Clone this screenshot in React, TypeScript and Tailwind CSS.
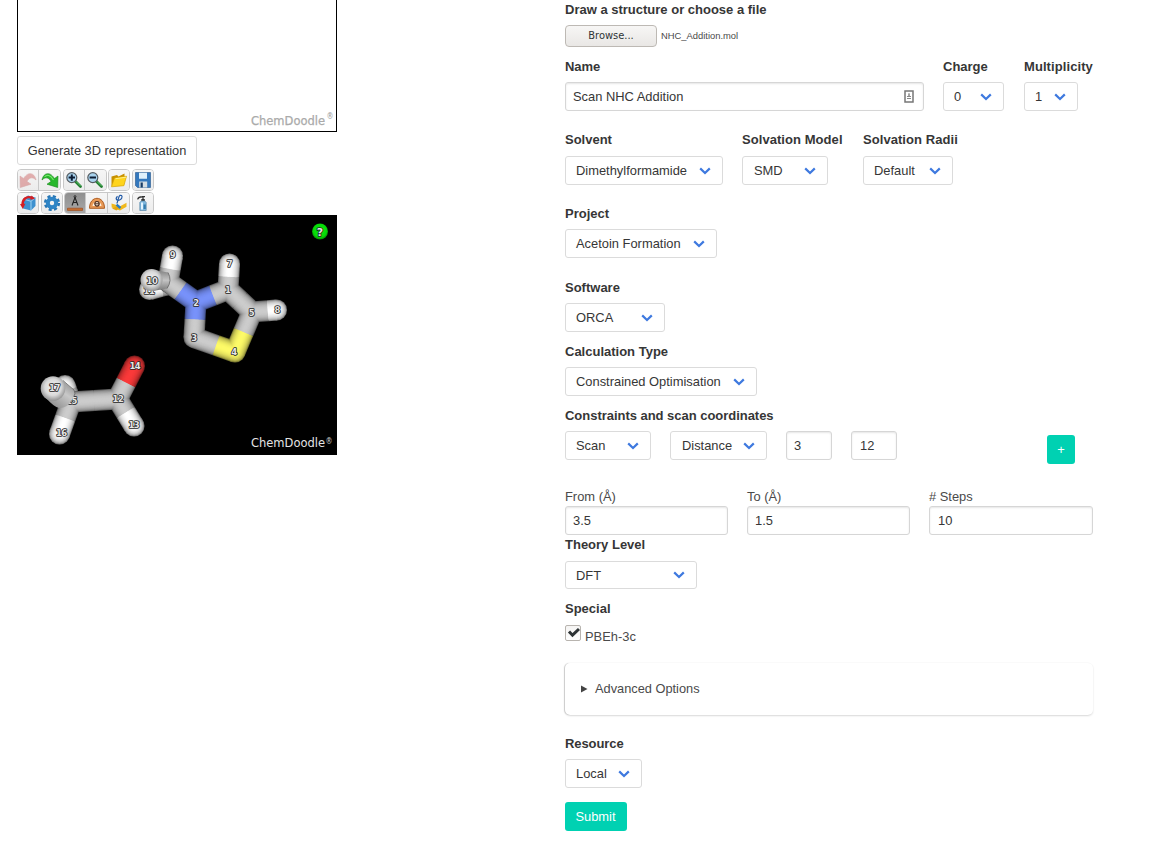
import React, { useState } from "react";

/* ---------- form primitives ---------- */

function Label({ children, className = "" }: { children: React.ReactNode; className?: string }) {
  return <div className={`h-5 whitespace-nowrap text-[13px] font-bold leading-5 text-[#363636] ${className}`}>{children}</div>;
}

function Select({ value, className = "", height = "h-[29px]" }: { value: string; className?: string; height?: string }) {
  return (
    <button
      type="button"
      className={`flex items-center justify-between rounded-[3px] border border-[#dbdbdb] bg-white pl-[10px] pr-[11px] text-[12.9px] leading-[13px] text-[#363636] ${height} ${className}`}
    >
      <span className="whitespace-nowrap">{value}</span>
      <svg width="12" height="8" viewBox="0 0 12 8" fill="none">
        <path d="M1.2 1.4 6 6 10.8 1.4" stroke="#3e79df" strokeWidth="2.2" />
      </svg>
    </button>
  );
}

function Field({ initial, className = "" }: { initial: string; className?: string }) {
  const [value, setValue] = useState(initial);
  return (
    <input
      value={value}
      onChange={(e) => setValue(e.target.value)}
      className={`block h-[29px] rounded-[3px] border border-[#d6d6d6] bg-white px-[7px] text-[12.9px] text-[#363636] shadow-[inset_0_1px_2px_rgba(10,10,10,0.1)] outline-none ${className}`}
    />
  );
}

/* ---------- toolbar ---------- */

function Icon({ children, faded = false }: { children: React.ReactNode; faded?: boolean }) {
  return (
    <svg width="18" height="18" viewBox="0 0 18 18" fill="none" className={`shrink-0 ${faded ? "opacity-40" : ""}`}>
      {children}
    </svg>
  );
}

function Magnifier({ plus = false }: { plus?: boolean }) {
  return (
    <Icon>
      <path d="M10.5 10.5 15.5 15.5" stroke="#1d7a2c" strokeWidth="2.8" strokeLinecap="round" />
      <path d="m11 10.4 4.8 4.8" stroke="#63c56c" strokeWidth="1" />
      <circle cx="6.8" cy="6.6" r="5" fill="#a9d3ee" stroke="#555b60" strokeWidth="1.2" />
      <path d="M3.6 6.6H10" stroke="#0c1c33" strokeWidth="2" />
      {plus && <path d="M6.8 3.4v6.4" stroke="#0c1c33" strokeWidth="2" />}
    </Icon>
  );
}

function ToolGroup({ children }: { children: React.ReactNode }) {
  return <div className="flex h-[22px] overflow-hidden rounded-[4px] border border-[#c8c8c8] bg-[#f1f1f1]">{children}</div>;
}

function Tool({ children, active = false, divided = false }: { children: React.ReactNode; active?: boolean; divided?: boolean }) {
  return (
    <button
      type="button"
      className={`flex h-5 items-center justify-center ${divided ? "w-[22px] border-l border-[#c8c8c8]" : "w-5"} ${
        active ? "bg-linear-to-b from-[#8f8f8f] to-[#a8a8a8]" : "bg-linear-to-b from-[#f6f6f6] to-[#ececec]"
      }`}
    >
      {children}
    </button>
  );
}

function Toolbar() {
  return (
    <div className="mt-[4px] flex flex-col gap-[1px]">
      <div className="flex gap-[1.5px]">
        <ToolGroup>
          <Tool>
            <Icon faded>
              <path d="M17 9C16 3 10-1 4.5 7.5L1 5 1.3 16.5 12 13.2 8 10.5C10 6.5 13.5 5.5 17 9Z" fill="#c64545" stroke="#b03b3b" strokeWidth=".6" />
            </Icon>
          </Tool>
          <Tool divided>
            <Icon>
              <path d="M1 9C2 3 8-1 13.5 7.5L17 5 16.7 16.5 6 13.2 10 10.5C8 6.5 4.5 5.5 1 9Z" fill="#27b72b" stroke="#15861a" strokeWidth=".6" />
              <path d="M3.5 6C6 3.2 9.5 4 12.5 9" stroke="#76e66b" strokeWidth="1.1" />
            </Icon>
          </Tool>
        </ToolGroup>
        <ToolGroup>
          <Tool><Magnifier plus /></Tool>
          <Tool divided><Magnifier /></Tool>
        </ToolGroup>
        <ToolGroup>
          <Tool>
            <Icon>
              <path d="M1.5 15.5V5.5L7 4l1.5 1.5L14.5 2.5v4L5 8Z" fill="#c79000" />
              <path d="m1.5 15.8 3-8.8 12-1.8-2.6 9.5Z" fill="#ffd41c" stroke="#d6a200" strokeWidth=".7" />
              <path d="m5.5 7.7 10.5-1.5" stroke="#fff08a" />
            </Icon>
          </Tool>
        </ToolGroup>
        <ToolGroup>
          <Tool>
            <Icon>
              <path d="M1.5 1.5h15v15h-13l-2-2Z" fill="#3478bd" stroke="#24568c" strokeWidth=".6" />
              <path d="M5 1.8h8v6H5Z" fill="#dff0fb" />
              <path d="M5.2 10.5h8v6h-8Z" fill="#d5dde3" />
              <path d="M6.6 11.4h2.2v5H6.6Z" fill="#173c67" />
            </Icon>
          </Tool>
        </ToolGroup>
      </div>
      <div className="flex gap-[1.5px]">
        <ToolGroup>
          <Tool>
            <Icon>
              <path d="m4 5 5-3.5 7.5 2V12L12 16.5 4 14.5Z" fill="#3e91cf" />
              <path d="m4 5 8 2.3 4.5-3.8M12 7.3v9" stroke="#9dd2f2" strokeWidth="1" />
              <path d="M13 3.8C7.5 1.5 3 5.5 3.6 11.5" stroke="#d51f22" strokeWidth="2.4" />
              <path d="m1 10 5.3-.3-2.5 5.3Z" fill="#d51f22" />
              <path d="m12.5 1.5 3.5 3.3-4.6 1Z" fill="#d51f22" />
            </Icon>
          </Tool>
        </ToolGroup>
        <ToolGroup>
          <Tool>
            <Icon>
              <circle cx="9" cy="9" r="6.5" stroke="#2877b5" strokeWidth="3.2" strokeDasharray="2.9 2.205" />
              <circle cx="9" cy="9" r="4.2" fill="#f1f1f1" stroke="#2e84c5" strokeWidth="4" />
            </Icon>
          </Tool>
        </ToolGroup>
        <ToolGroup>
          <Tool active>
            <Icon>
              <path d="M6 11.5 9 3.5l3 8M7.2 8.5h3.6" stroke="#222" strokeWidth="1.1" />
              <circle cx="9" cy="2.6" r="1" stroke="#222" strokeWidth=".8" />
              <path d="M1.5 14.2h15v2.2h-15Z" fill="#c67031" stroke="#9c4b1c" strokeWidth=".7" />
            </Icon>
          </Tool>
          <Tool divided>
            <Icon>
              <path d="M1.5 14.3C1.5 1 16.5 1 16.5 14.3Z" fill="#e79855" stroke="#b05f25" />
              <path d="M4.5 12C4.8 6.2 13.2 6.2 13.5 12Z" fill="#fff0de" />
              <ellipse cx="9" cy="9.8" rx="2.2" ry="2.3" stroke="#4b2b1c" strokeWidth="1.2" />
              <path d="M7 9.8h4" stroke="#4b2b1c" />
            </Icon>
          </Tool>
          <Tool divided>
            <Icon>
              <path d="m1.5 9.5 5 1.5 3.2 1.6 6.8-3.8v3.9l-6.5 3.7-8.3-3Z" fill="#f0b81c" />
              <path d="m2 14.5 5.5-2.3 2.2 1.2-3.2 3Z" fill="#e3a514" />
              <path d="m6.5 10.6 4 3.4" stroke="#287cc5" strokeWidth="2.4" />
              <path d="M7.5 2.3C4.7 5 7 7.6 10 5.8 13 4 12.5.6 9.9 1.4 8.5 2 8.4 6 6.8 9.6" stroke="#245ca8" strokeWidth="1.2" />
            </Icon>
          </Tool>
        </ToolGroup>
        <ToolGroup>
          <Tool>
            <Icon>
              <path d="M3.6 5.4C4.4 3 6 2.6 9 2.8V6M8 2.6h3" stroke="#333" strokeWidth="1.3" />
              <path d="M7.3 5h3.5v2H7.3Z" fill="#333" />
              <path d="M5.8 8.5 7.2 7h3.6l1.4 1.5v8H5.8Z" fill="#7fb8df" stroke="#5d8aa9" strokeWidth=".7" />
              <path d="M7 8.5h2v7H7Z" fill="#e2f4ff" />
              <path d="M9.6 10.5h2.2v4.5H9.6Z" fill="#347cae" />
            </Icon>
          </Tool>
        </ToolGroup>
      </div>
    </div>
  );
}

/* ---------- molecule ---------- */

type Element = "C" | "H" | "N" | "S" | "O";
type Atom = { x: number; y: number; el: Element };
type Bond = [Atom, Atom, number];

const BASE: Record<Element, [number, number, number]> = {
  C: [204, 204, 204],
  H: [255, 255, 255],
  N: [120, 146, 250],
  S: [253, 250, 104],
  O: [250, 58, 58],
};
const LAYERS = Array.from({ length: 14 }, (_, i) => i);

function shade(el: Element, layer: number) {
  const t = layer / (LAYERS.length - 1);
  const k = 0.46 + 0.54 * Math.pow(1 - (1 - t) * (1 - t), 0.6);
  return `rgb(${BASE[el].map((c) => Math.round(c * k)).join(",")})`;
}

function Sticks({ bonds, radius = 10.5 }: { bonds: Bond[]; radius?: number }) {
  const atoms = Array.from(new Set(bonds.flatMap(([a, b]) => [a, b])));
  return (
    <g>
      {LAYERS.map((layer) => {
        const r = radius * (1 - layer / LAYERS.length);
        return (
          <g key={layer}>
            {atoms.map((a, i) => (
              <circle key={i} cx={a.x} cy={a.y} r={r} fill={shade(a.el, layer)} />
            ))}
            {bonds.map(([a, b, f], i) => {
              const mx = a.x + (b.x - a.x) * f;
              const my = a.y + (b.y - a.y) * f;
              return (
                <g key={i} strokeWidth={r * 2}>
                  <path d={`M${a.x} ${a.y}L${mx} ${my}`} stroke={shade(a.el, layer)} />
                  <path d={`M${mx} ${my}L${b.x} ${b.y}`} stroke={shade(b.el, layer)} />
                </g>
              );
            })}
          </g>
        );
      })}
    </g>
  );
}

const atom = (el: Element, x: number, y: number): Atom => ({ el, x, y });
const c1 = atom("C", 228, 289.5);
const n2 = atom("N", 196, 302);
const c3 = atom("C", 194, 337.5);
const s4 = atom("S", 235, 352);
const c5 = atom("C", 252, 312);
const c6 = atom("C", 168, 282);
const h7 = atom("H", 229.5, 264);
const h8 = atom("H", 276.5, 310);
const h9 = atom("H", 172.5, 256);
const c12 = atom("C", 117.5, 399);
const h13 = atom("H", 134, 426);
const o14 = atom("O", 134.5, 366);
const c15 = atom("C", 71, 402);
const h16 = atom("H", 59.5, 434);

const FRAME: Bond[] = [
  [c6, h9, 0.5], [c6, n2, 0.45], [n2, c1, 0.53], [n2, c3, 0.49], [c3, s4, 0.54],
  [s4, c5, 0.5], [c5, c1, 0.5], [c1, h7, 0.5], [c5, h8, 0.64],
  [c15, c12, 0.5], [c12, o14, 0.5], [c12, h13, 0.5], [c15, h16, 0.5],
];
const BACK: Bond[] = [
  [atom("C", 166, 285), atom("H", 149.5, 289.5), 0.3],
  [atom("C", 68, 394), atom("H", 65, 385.5), 0.4],
];
const LABELS: [string, number, number][] = [
  ["9", 172.5, 255], ["7", 229.5, 264], ["1", 227.8, 289.5], ["2", 196, 303], ["5", 251.5, 313], ["8", 277.3, 309.5],
  ["3", 194, 337.5], ["4", 234, 352], ["14", 134.8, 366], ["12", 118, 399],
  ["13", 133.8, 424.5], ["16", 61.3, 432.5],
];

function AtomLabel({ text, x, y }: { text: string; x: number; y: number }) {
  return (
    <text
      x={x}
      y={y + 3.1}
      textAnchor="middle"
      fontFamily="DejaVu Sans, sans-serif"
      fontWeight="bold"
      fontSize="8.5"
      letterSpacing="-.5"
      fill="#e6e6e6"
      stroke="#222"
      strokeWidth="1.6"
      strokeLinejoin="round"
      paintOrder="stroke"
    >
      {text}
    </text>
  );
}

function MoleculeViewer() {
  return (
    <svg width="320" height="240" viewBox="17 215 320 240" className="block bg-black">
      <defs>
        <radialGradient id="cap" cx=".5" cy=".45" r=".55">
          <stop offset="0" stopColor="#f4f4f4" />
          <stop offset=".6" stopColor="#dadada" />
          <stop offset="1" stopColor="#929292" />
        </radialGradient>
        <linearGradient id="methylA" x1="0" y1="0" x2="0" y2="1">
          <stop offset="0" stopColor="#7d7d7d" />
          <stop offset=".5" stopColor="#c4c4c4" />
          <stop offset="1" stopColor="#777" />
        </linearGradient>
        <linearGradient id="methylB" x1="1" y1="0" x2=".3" y2="1">
          <stop offset="0" stopColor="#777" />
          <stop offset=".5" stopColor="#c8c8c8" />
          <stop offset="1" stopColor="#909090" />
        </linearGradient>
        <radialGradient id="help" cx=".5" cy=".45" r=".55">
          <stop offset="0" stopColor="#0cf10c" />
          <stop offset=".75" stopColor="#06d806" />
          <stop offset="1" stopColor="#048404" />
        </radialGradient>
      </defs>
      <Sticks bonds={BACK} />
      <AtomLabel text="11" x={149} y={291} />
      <Sticks bonds={FRAME} />
      <AtomLabel text="15" x={71.5} y={400.5} />
      <path d="m152 269.5 16 3q4.5 8-1 16l-14 2.5Z" fill="url(#methylA)" />
      <path d="M168 272.5q4.5 8-1 16" stroke="#666" strokeWidth=".8" fill="none" />
      <circle cx="151.5" cy="280" r="11" fill="url(#cap)" />
      <path d="m60 378.5 14 11.5q2 5-3 11-3 7-12 7-5-1-13-10Z" fill="url(#methylB)" />
      <path d="M63 380.5 74 390q2 4 0 6" stroke="#666" strokeWidth=".8" fill="none" />
      <circle cx="53" cy="388.5" r="12.3" fill="url(#cap)" />
      <AtomLabel text="10" x={152} y={280.5} />
      <AtomLabel text="17" x={54.5} y={388} />
      {LABELS.map(([t, x, y]) => (
        <AtomLabel key={t} text={t} x={x} y={y} />
      ))}
      <circle cx="320" cy="231.5" r="8" fill="url(#help)" />
      <text x="320" y="235.5" textAnchor="middle" fontFamily="DejaVu Sans, sans-serif" fontWeight="bold" fontSize="11" fill="#e6e6e6" stroke="#222" strokeWidth="1.6" paintOrder="stroke">?</text>
      <text x="251" y="447" fontFamily="DejaVu Sans, sans-serif" fontSize="11.5" textLength="74" fill="#e4e4e4">ChemDoodle</text>
      <text x="325.5" y="444" fontFamily="DejaVu Sans, sans-serif" fontSize="8" textLength="7" lengthAdjust="spacingAndGlyphs" fill="#d0d0d0">®</text>
    </svg>
  );
}

/* ---------- page ---------- */

function StructurePanel() {
  return (
    <div className="w-80">
      <div className="h-[132px] border border-t-0 border-black">
        <svg width="318" height="131" viewBox="18 0 318 131" className="block">
          <text x="251" y="125" fontFamily="DejaVu Sans, sans-serif" fontSize="11.5" textLength="74" stroke="#aaaaaa" strokeWidth=".25" fill="#aaaaaa">ChemDoodle</text>
          <text x="326.5" y="119" fontFamily="DejaVu Sans, sans-serif" fontSize="8" textLength="7" lengthAdjust="spacingAndGlyphs" fill="#999999">®</text>
        </svg>
      </div>
      <button type="button" className="mt-1 flex h-[29px] w-[180px] items-center justify-center whitespace-nowrap rounded-[3px] border border-[#dbdbdb] text-[12.8px] text-[#363636]">
        Generate 3D representation
      </button>
      <Toolbar />
      <div className="mt-[1px]">
        <MoleculeViewer />
      </div>
    </div>
  );
}

function CalculationForm() {
  return (
    <div className="w-[528px]">
      <Label>Draw a structure or choose a file</Label>
      <div className="mt-[5px] flex h-[22px] items-center gap-1">
        <button type="button" className="h-[22px] w-[92px] rounded-[4px] border border-[#bdb9b4] bg-linear-to-b from-[#f7f6f5] to-[#e9e7e5] pb-[2px] font-['DejaVu_Sans_Condensed','DejaVu_Sans',sans-serif] text-[11px] leading-none text-[#2e3436]">
          Browse...
        </button>
        <span className="text-[9.4px] text-[#4a4a4a]">NHC_Addition.mol</span>
      </div>

      <div className="mt-[10px] flex">
        <div className="w-[378px]">
          <Label className="tracking-[-0.1px]">Name</Label>
          <div className="relative mt-[5px] w-[359px]">
            <Field initial="Scan NHC Addition" className="w-full" />
            <svg width="10" height="13" viewBox="0 0 10 13" fill="none" className="absolute right-[10px] top-2">
              <path d="M1 1h8v11H1Z" stroke="#777" strokeWidth="1.5" />
              <path d="M5 3v3M3 6.5h4M3 8.5h4" stroke="#888" />
              <path d="M4 5h2" stroke="#888" />
            </svg>
          </div>
        </div>
        <div className="w-[81px]">
          <Label>Charge</Label>
          <Select value="0" className="mt-[5px] w-[61px]" />
        </div>
        <div>
          <Label className="tracking-[0.08px]">Multiplicity</Label>
          <Select value="1" className="mt-[5px] w-[54px]" />
        </div>
      </div>

      <div className="mt-[19px] flex">
        <div className="w-[177px]">
          <Label>Solvent</Label>
          <Select value="Dimethylformamide" className="mt-[6px] w-[158px]" />
        </div>
        <div className="w-[121px]">
          <Label className="tracking-[0.06px]">Solvation Model</Label>
          <Select value="SMD" className="mt-[6px] w-[86px] pl-[11px]" />
        </div>
        <div>
          <Label className="tracking-[0.06px]">Solvation Radii</Label>
          <Select value="Default" className="mt-[6px] w-[90px]" />
        </div>
      </div>

      <Label className="mt-[19px]">Project</Label>
      <Select value="Acetoin Formation" className="mt-[5px] w-[152px]" />

      <Label className="mt-5">Software</Label>
      <Select value="ORCA" className="mt-[5px] w-[100px]" />

      <Label className="mt-[10px]">Calculation Type</Label>
      <Select value="Constrained Optimisation" className="mt-[5px] w-[192px]" />

      <Label className="mt-[10px] tracking-[-0.03px]">Constraints and scan coordinates</Label>
      <div className="mt-[5px] flex h-[33px] items-start gap-[19px]">
        <Select value="Scan" className="w-[86px]" />
        <Select value="Distance" className="w-[97px] pl-[11px]" />
        <Field initial="3" className="w-[46px]" />
        <Field initial="12" className="w-[46px] pl-2" />
        <button type="button" className="ml-auto mr-[18px] mt-1 h-[29px] w-7 rounded-[3px] bg-[#00d1b2] text-[12.9px] leading-[13px] text-white">+</button>
      </div>

      <div className="mt-[23px] grid grid-cols-[163px_163px_164px] gap-[19px] text-[12.9px] text-[#4a4a4a]">
        <label>
          <span className="block h-[19px] leading-5">From (Å)</span>
          <Field initial="3.5" className="w-full" />
        </label>
        <label>
          <span className="block h-[19px] leading-5">To (Å)</span>
          <Field initial="1.5" className="w-full" />
        </label>
        <label>
          <span className="block h-[19px] leading-5"># Steps</span>
          <Field initial="10" className="w-full pl-2" />
        </label>
      </div>

      <Label>Theory Level</Label>
      <Select value="DFT" height="h-[28px]" className="mt-[6px] w-[132px]" />

      <Label className="mt-[10px]">Special</Label>
      <div className="mt-[6px] flex h-[22px] items-start gap-1 text-[12.9px] text-[#4a4a4a]">
        <span className="flex size-4 items-center justify-center rounded-[2px] border border-[#b8b4af] bg-linear-to-b from-[#f5f4f3] to-white">
          <svg width="14" height="12" viewBox="0 0 14 12" fill="none" className="shrink-0">
            <path d="M3 4.5 6.5 8.2 13 2" stroke="#2e3436" strokeWidth="3" />
          </svg>
        </span>
        <span className="mt-[2px] leading-5">PBEh-3c</span>
      </div>

      <div className="mt-4 flex h-[52px] items-center rounded-[5px] pl-4 text-[12.8px] text-[#4a4a4a] shadow-[0_1px_2px_rgba(10,10,10,0.14),-1px_0_1px_rgba(10,10,10,0.18)]">
        <svg width="7" height="8" viewBox="0 0 7 8">
          <path d="M0 .5v7L6.5 4Z" fill="#444" />
        </svg>
        <span className="ml-[7px]">Advanced Options</span>
      </div>

      <Label className="mt-[19px] tracking-[-0.08px]">Resource</Label>
      <Select value="Local" className="mt-[5px] w-[77px]" />
      <button type="button" className="mt-[14px] block h-[29px] w-[62px] rounded-[3px] bg-[#00d1b2] pr-[1px] text-[12.9px] leading-[13px] text-white">Submit</button>
    </div>
  );
}

export default function App() {
  return (
    <main className="flex h-[855px] w-[1156px] items-start gap-[228px] overflow-hidden bg-white pl-[17px] font-['Liberation_Sans',Arial,sans-serif]">
      <StructurePanel />
      <CalculationForm />
    </main>
  );
}
